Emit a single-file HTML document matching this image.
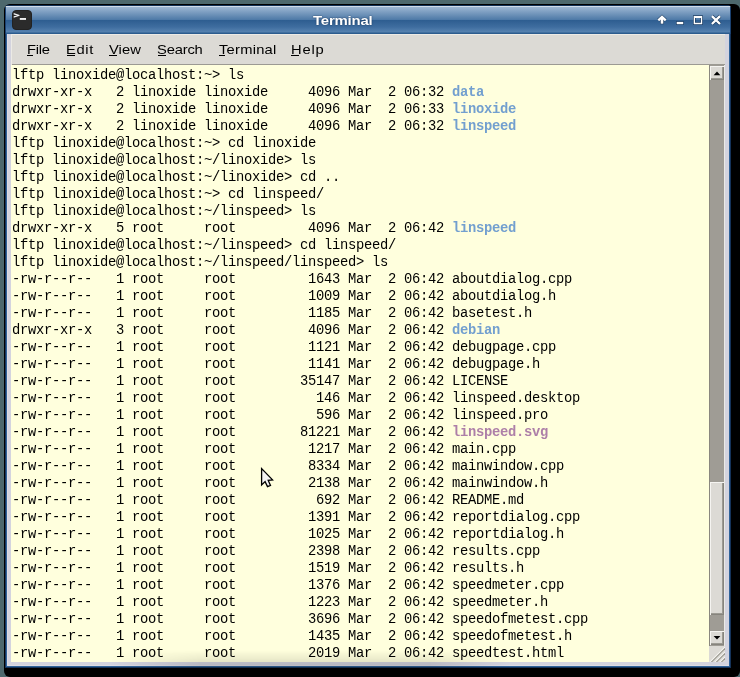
<!DOCTYPE html>
<html><head><meta charset="utf-8">
<style>
html,body{margin:0;padding:0}
body{width:740px;height:677px;background:#4d686d;position:relative;overflow:hidden;font-family:"Liberation Sans",sans-serif}
.a{position:absolute}
#shadow{left:4px;top:4px;width:736px;height:673px;background:#000;border-radius:6px}
#frame{left:5px;top:5px;width:726px;height:663px;background:#15335a;border-radius:4px 4px 0 0}
#frame2{left:6px;top:34px;width:724px;height:633px;background:#2f6299}
#lav{left:7px;top:34px;width:722px;height:632px;background:#d3d3de;box-shadow:inset 1px 0 0 #dcdae2, inset 0 -1px 0 #dfdce3}
#title{left:5px;top:5px;width:726px;height:29px;border-radius:4px 4px 0 0;
background:linear-gradient(to bottom,#0f2f55 0px,#0f2f55 1px,#d0dcea 1px,#d0dcea 2px,#9cb6d2 2px,#4c78a6 15px,#2d5d90 15px,#3f6d9f 22px,#5682b0 27px,#2c5c8e 28px,#2c5c8e 29px)}
#tleft{left:5px;top:7px;width:1px;height:27px;background:#1b4170}
#tright{left:730px;top:7px;width:1px;height:27px;background:#1b4170}
#ttext{left:313px;top:13px;font-weight:bold;font-size:13.6px;color:#fff;letter-spacing:-0.2px;text-shadow:0 0 1.5px #10284a;-webkit-font-smoothing:antialiased;transform:translateZ(0) scaleX(1.1);transform-origin:0 0}
#menubar{left:11px;top:34px;width:714px;height:31px;background:#dcdad5;box-shadow:inset 0 1px 0 #eeebe6, inset 1px 0 0 #eceae5, inset 0 -1px 0 #9c9a93}
.m{position:absolute;top:42px;font-size:13.4px;color:#000;-webkit-font-smoothing:antialiased;transform:translateZ(0) scaleX(1.1);transform-origin:0 0}
.m u{text-decoration:none;border-bottom:1px solid #000}
#term{left:11px;top:65px;width:698px;height:597px;background:#ffffdd;overflow:hidden}
#txt{-webkit-font-smoothing:antialiased;transform:translateZ(0);position:absolute;left:1px;top:2px;font-family:"Liberation Mono",monospace;font-size:13.8px;letter-spacing:-0.28px;color:#000;white-space:pre}
.r{height:17px;line-height:17px}
b.d{color:#729fcf}
b.s{color:#ad7fa8}
#sb{left:709px;top:65px;width:15px;height:581px;background:#9f9c95;box-shadow:inset 1px 0 0 #8a877f}
#sbl{left:724px;top:65px;width:1px;height:597px;background:#ebeae6}
.btn{position:absolute;background:#dcdad5;box-shadow:inset 1px 1px 0 #f5f4f1, inset -1px -1px 0 #86847d, inset -2px -2px 0 #9c9a93}
#grip{left:709px;top:646px;width:16px;height:16px;background:#dcdad5;overflow:hidden}
#shade{left:110px;top:650px;width:400px;height:18px;background:linear-gradient(to bottom,rgba(0,0,0,0) 0,rgba(0,0,0,0.10) 12px,rgba(0,0,0,0.14) 16px,rgba(0,0,0,0.16) 18px);-webkit-mask-image:linear-gradient(to right,transparent 0,#000 90px,#000 320px,transparent 400px)}
</style></head><body>
<div class="a" id="shadow"></div>
<div class="a" id="frame"></div>
<div class="a" id="frame2"></div>
<div class="a" id="lav"></div>
<div class="a" id="title"></div>
<div class="a" id="tleft"></div><div class="a" id="tright"></div>
<svg class="a" style="left:12px;top:10px" width="20" height="20" viewBox="0 0 20 20">
<rect x="0.5" y="0.5" width="19" height="19" rx="3.5" fill="#2b2b2b" stroke="#222" stroke-width="1"/>
<path d="M1.7 3 L7.6 5.1 L7.6 5.7 L1.7 7.8 L1.7 6.3 L5.3 5.4 L1.7 4.5 Z" fill="#f2f2f2"/>
<rect x="7.8" y="8" width="6.2" height="1.9" fill="#f0f0f0"/>
</svg>
<div class="a" id="ttext">Terminal</div>
<svg class="a" style="left:650px;top:10px" width="80" height="20" viewBox="0 0 80 20">
<g fill="none" stroke="#173659" stroke-opacity="0.85" stroke-linecap="butt">
<path d="M8.3 10.4 L12 6.9 L15.7 10.4" stroke-width="3.6"/>
<path d="M12 7.5 V14.2" stroke-width="4"/>
<rect x="26.7" y="11.9" width="6.5" height="2.3" stroke-width="1.4"/>
<path d="M44.4 6.6 h7.1 v6.9 h-7.1 Z" stroke-width="2.8"/>
<path d="M61.9 6.1 L70 14 M70 6.1 L61.9 14" stroke-width="3.6"/>
</g>
<g fill="none" stroke="#fff">
<path d="M8.3 10.4 L12 6.9 L15.7 10.4" stroke-width="2.4"/>
<path d="M12 7.5 V13.7" stroke-width="2.6"/>
<path d="M61.9 6.1 L70 14 M70 6.1 L61.9 14" stroke-width="2.3"/>
</g>
<rect x="26.7" y="11.9" width="6.5" height="2.3" fill="#fff"/>
<path fill="#fff" fill-rule="evenodd" d="M43.7 5.9 H52.2 V14.2 H43.7 Z M45 8 V12.8 H50.9 V8 Z"/>
</svg>
<div class="a" id="menubar"></div>
<div class="m" style="left:27px;letter-spacing:-0.27px">File</div><div class="a" style="left:27px;top:55px;width:6px;height:1px;background:#000"></div>
<div class="m" style="left:66px;letter-spacing:0.58px">Edit</div><div class="a" style="left:67px;top:55px;width:8px;height:1px;background:#000"></div>
<div class="m" style="left:109px;letter-spacing:0.06px">View</div><div class="a" style="left:109px;top:55px;width:8px;height:1px;background:#000"></div>
<div class="m" style="left:157px;letter-spacing:-0.16px">Search</div><div class="a" style="left:158px;top:55px;width:8px;height:1px;background:#000"></div>
<div class="m" style="left:219px;letter-spacing:0.21px">Terminal</div><div class="a" style="left:219px;top:55px;width:6px;height:1px;background:#000"></div>
<div class="m" style="left:291px;letter-spacing:0.76px">Help</div><div class="a" style="left:291px;top:55px;width:8px;height:1px;background:#000"></div>
<div class="a" id="term"><div id="txt"><div class="r">lftp linoxide@localhost:~&gt; ls</div><div class="r">drwxr-xr-x   2 linoxide linoxide     4096 Mar  2 06:32 <b class="d">data</b></div><div class="r">drwxr-xr-x   2 linoxide linoxide     4096 Mar  2 06:33 <b class="d">linoxide</b></div><div class="r">drwxr-xr-x   2 linoxide linoxide     4096 Mar  2 06:32 <b class="d">linspeed</b></div><div class="r">lftp linoxide@localhost:~&gt; cd linoxide</div><div class="r">lftp linoxide@localhost:~/linoxide&gt; ls</div><div class="r">lftp linoxide@localhost:~/linoxide&gt; cd ..</div><div class="r">lftp linoxide@localhost:~&gt; cd linspeed/</div><div class="r">lftp linoxide@localhost:~/linspeed&gt; ls</div><div class="r">drwxr-xr-x   5 root     root         4096 Mar  2 06:42 <b class="d">linspeed</b></div><div class="r">lftp linoxide@localhost:~/linspeed&gt; cd linspeed/</div><div class="r">lftp linoxide@localhost:~/linspeed/linspeed&gt; ls</div><div class="r">-rw-r--r--   1 root     root         1643 Mar  2 06:42 aboutdialog.cpp</div><div class="r">-rw-r--r--   1 root     root         1009 Mar  2 06:42 aboutdialog.h</div><div class="r">-rw-r--r--   1 root     root         1185 Mar  2 06:42 basetest.h</div><div class="r">drwxr-xr-x   3 root     root         4096 Mar  2 06:42 <b class="d">debian</b></div><div class="r">-rw-r--r--   1 root     root         1121 Mar  2 06:42 debugpage.cpp</div><div class="r">-rw-r--r--   1 root     root         1141 Mar  2 06:42 debugpage.h</div><div class="r">-rw-r--r--   1 root     root        35147 Mar  2 06:42 LICENSE</div><div class="r">-rw-r--r--   1 root     root          146 Mar  2 06:42 linspeed.desktop</div><div class="r">-rw-r--r--   1 root     root          596 Mar  2 06:42 linspeed.pro</div><div class="r">-rw-r--r--   1 root     root        81221 Mar  2 06:42 <b class="s">linspeed.svg</b></div><div class="r">-rw-r--r--   1 root     root         1217 Mar  2 06:42 main.cpp</div><div class="r">-rw-r--r--   1 root     root         8334 Mar  2 06:42 mainwindow.cpp</div><div class="r">-rw-r--r--   1 root     root         2138 Mar  2 06:42 mainwindow.h</div><div class="r">-rw-r--r--   1 root     root          692 Mar  2 06:42 README.md</div><div class="r">-rw-r--r--   1 root     root         1391 Mar  2 06:42 reportdialog.cpp</div><div class="r">-rw-r--r--   1 root     root         1025 Mar  2 06:42 reportdialog.h</div><div class="r">-rw-r--r--   1 root     root         2398 Mar  2 06:42 results.cpp</div><div class="r">-rw-r--r--   1 root     root         1519 Mar  2 06:42 results.h</div><div class="r">-rw-r--r--   1 root     root         1376 Mar  2 06:42 speedmeter.cpp</div><div class="r">-rw-r--r--   1 root     root         1223 Mar  2 06:42 speedmeter.h</div><div class="r">-rw-r--r--   1 root     root         3696 Mar  2 06:42 speedofmetest.cpp</div><div class="r">-rw-r--r--   1 root     root         1435 Mar  2 06:42 speedofmetest.h</div><div class="r">-rw-r--r--   1 root     root         2019 Mar  2 06:42 speedtest.html</div></div></div>
<div class="a" id="sb"></div><div class="a" id="sbl"></div>
<div class="btn" style="left:710px;top:66px;width:14px;height:14px"></div>
<div class="btn" style="left:710px;top:482px;width:14px;height:133px"></div>
<div class="btn" style="left:710px;top:631px;width:14px;height:14px"></div>
<svg class="a" style="left:709px;top:65px" width="16" height="597" viewBox="0 0 16 597">
<path d="M4.6 10.2 L8 6.6 L11.4 10.2 Z" fill="#000"/>
<path d="M4.6 571 L8 574.6 L11.4 571 Z" fill="#000"/>
</svg>
<div class="a" id="grip"></div>
<svg class="a" style="left:709px;top:646px" width="16" height="16" viewBox="0 0 16 16">
<g stroke-width="1.1" stroke-linecap="butt">
<path d="M0.6 16.4 L16.4 0.6" stroke="#f7f6f3"/><path d="M1.9 16.6 L16.6 1.9" stroke="#9a988f"/>
<path d="M5.6 16.4 L16.4 5.6" stroke="#f7f6f3"/><path d="M6.9 16.6 L16.6 6.9" stroke="#9a988f"/>
<path d="M10.6 16.4 L16.4 10.6" stroke="#f7f6f3"/><path d="M11.9 16.6 L16.6 11.9" stroke="#9a988f"/>
</g>
</svg>
<div class="a" id="shade"></div>
<svg class="a" style="left:258px;top:464px" width="20" height="26" viewBox="0 0 20 26">
<path d="M3.6 4.6 L3.6 21 L7.1 17.6 L9.5 22.6 L12.5 21.4 L10.2 16.4 L14.6 15.9 Z" fill="#f4f4f4" stroke="#000" stroke-width="1.3" stroke-linejoin="miter"/>
</svg>
</body></html>
